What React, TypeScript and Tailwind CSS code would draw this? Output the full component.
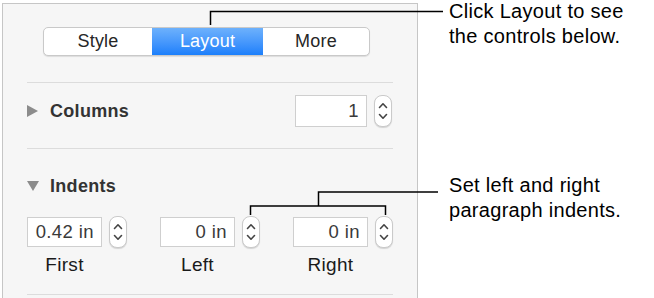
import React from "react";

const font = { fontFamily: '"Liberation Sans", Arial, Helvetica, sans-serif' };

function Stepper() {
  return (
    <div className="relative w-[18px] h-[32px] rounded-[8px] border border-[#cacaca] bg-white shadow-[0_1px_1px_rgba(0,0,0,0.14)]">
      <svg className="absolute left-0 top-0" width="16" height="30" viewBox="0 0 16 30" fill="none">
        <path d="M4.5 11.5 L8 7.8 L11.5 11.5" stroke="#444" strokeWidth="1.6" strokeLinecap="round" strokeLinejoin="round" />
        <path d="M4.5 18.5 L8 22.2 L11.5 18.5" stroke="#444" strokeWidth="1.6" strokeLinecap="round" strokeLinejoin="round" />
      </svg>
    </div>
  );
}

function Field({ value, w, h }: { value: string; w: string; h: string }) {
  return (
    <div
      className={`${w} ${h} bg-white border border-[#cfcfcf] flex items-center justify-end pr-[7px] text-[18.5px] tracking-[0.4px] text-[#3a3a3a]`}
    >
      {value}
    </div>
  );
}

function IndentGroup({ value, label }: { value: string; label: string }) {
  return (
    <div className="flex flex-col">
      <div className="flex items-center">
        <Field value={value} w="w-[75px]" h="h-[30px]" />
        <div className="ml-[7px]">
          <Stepper />
        </div>
      </div>
      <div className="w-[75px] mt-[7px] h-[20px] leading-[20px] text-center text-[19px] tracking-[0.3px] text-[#1a1a1a]">
        {label}
      </div>
    </div>
  );
}

export default function App() {
  return (
    <div className="relative w-[654px] h-[298px] bg-white flex overflow-hidden" style={font}>
      {/* Inspector panel */}
      <div className="ml-[2px] mt-[3px] w-[416px] h-[300px] bg-[#f6f6f6] border-l border-t border-r border-[#c6c6c6] flex flex-col px-6 pt-[23px]">
        {/* Segmented control */}
        <div className="ml-[16px] w-[327px] h-[29px] flex rounded-[5px] border border-[#c9c9c9] bg-white shadow-[0_1px_1px_rgba(0,0,0,0.10)] overflow-hidden text-[18px] tracking-[0.2px]">
          <div className="w-[108px] flex items-center justify-center text-[#262626]">Style</div>
          <div className="w-[111px] flex items-center justify-center text-white bg-linear-to-b from-[#6db1fc] to-[#1a7ffb]">
            Layout
          </div>
          <div className="flex-1 flex items-center justify-center text-[#262626]">More</div>
        </div>

        <div className="mt-[26px] h-px bg-[#dcdcdc]" />

        {/* Columns row */}
        <div className="flex items-center justify-between mt-[12px] h-[32px]">
          <div className="flex items-center">
            <svg width="11" height="12" viewBox="0 0 11 12">
              <path d="M0 0 L11 6 L0 12 Z" fill="#8c8c8c" />
            </svg>
            <span className="ml-[12px] text-[18px] font-bold tracking-[0.3px] text-[#333333]">Columns</span>
          </div>
          <div className="flex items-center">
            <Field value="1" w="w-[72px]" h="h-[32px]" />
            <div className="ml-[7px] mr-[1px]">
              <Stepper />
            </div>
          </div>
        </div>

        <div className="mt-[21px] h-px bg-[#dcdcdc]" />

        {/* Indents heading */}
        <div className="flex items-center mt-[27px] h-[20px]">
          <svg width="12" height="10" viewBox="0 0 12 10">
            <path d="M0 0 L12 0 L6 10 Z" fill="#8c8c8c" />
          </svg>
          <span className="ml-[11px] text-[18px] font-bold tracking-[0.3px] text-[#333333]">Indents</span>
        </div>

        {/* Indent fields */}
        <div className="flex gap-[33px] mt-[20px]">
          <IndentGroup value="0.42 in" label="First" />
          <IndentGroup value="0 in" label="Left" />
          <IndentGroup value="0 in" label="Right" />
        </div>

        <div className="mt-[19px] h-px bg-[#dcdcdc]" />
      </div>

      {/* Callout texts */}
      <div className="flex flex-col ml-[31px] text-[20px] leading-[25px] tracking-[0.3px] text-black">
        <div className="-mt-[1px]">
          <div>Click Layout to see</div>
          <div>the controls below.</div>
        </div>
        <div className="mt-[124px]">
          <div>Set left and right</div>
          <div>paragraph indents.</div>
        </div>
      </div>

      {/* Callout lines */}
      <svg className="absolute left-0 top-0 pointer-events-none" width="654" height="298" viewBox="0 0 654 298" fill="none">
        <polyline points="210.5,25 210.5,11.5 443,11.5" stroke="#000" strokeWidth="1.5" />
        <polyline points="250.5,215 250.5,206 385.5,206 385.5,215" stroke="#000" strokeWidth="1.5" />
        <polyline points="318.5,206 318.5,192 438,192" stroke="#000" strokeWidth="1.5" />
      </svg>
    </div>
  );
}
